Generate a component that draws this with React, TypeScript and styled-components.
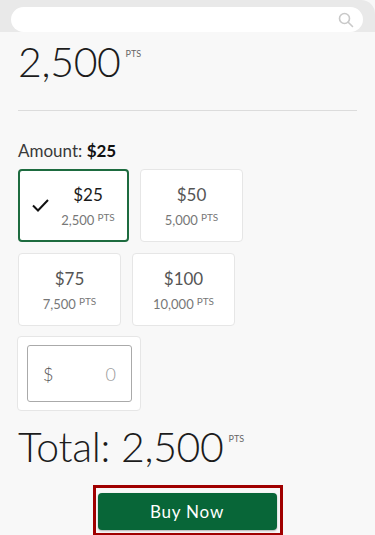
import React from "react";
import styled, { createGlobalStyle } from "styled-components";

const Global = createGlobalStyle`
  html, body { margin: 0; padding: 0; background: #f8f8f8; }
  body { font-family: Lato, "Open Sans", sans-serif; color: #222; }
  * { box-sizing: border-box; }
`;

const Page = styled.div`
  width: 375px;
  height: 535px;
  overflow: hidden;
  background: #f8f8f8;
  display: flex;
  flex-direction: column;
`;

const Header = styled.div`
  height: 40px;
  background: #e9e9e9;
  border-top-right-radius: 14px;
  padding: 7px 12px 0 11px;
`;

const Search = styled.div`
  height: 25px;
  background: #fff;
  border-radius: 13px;
  display: flex;
  align-items: center;
  justify-content: flex-end;
  padding-right: 9px;
`;

const Content = styled.div`
  padding: 0 18px;
  display: flex;
  flex-direction: column;
`;

const BigValue = styled.div<{ $size: number }>`
  display: flex;
  align-items: flex-start;
  font-weight: 300;
  font-size: ${(p) => p.$size}px;
  line-height: 1;
  color: #1c1c1c;
  letter-spacing: -0.3px;
`;

const Unit = styled.span`
  font-size: 9px;
  font-weight: 400;
  color: #666;
  margin-left: 5px;
  margin-top: 8px;
  letter-spacing: 0;
`;

const PointsRow = styled.div`
  margin-top: 9px;
`;

const Divider = styled.hr`
  border: none;
  border-top: 1px solid #dcdcdc;
  margin: 28px 0 0 0;
`;

const AmountLabel = styled.div`
  margin-top: 29px;
  font-size: 17px;
  color: #3a3a3a;
  b {
    font-weight: 700;
    color: #111;
  }
`;

const Cards = styled.div`
  margin-top: 8px;
  display: flex;
  flex-direction: column;
  gap: 11px;
`;

const CardRow = styled.div<{ $gap: number }>`
  display: flex;
  gap: ${(p) => p.$gap}px;
`;

const Card = styled.div<{ $selected?: boolean; $w: number }>`
  width: ${(p) => p.$w}px;
  height: 73px;
  background: #fff;
  border: ${(p) => (p.$selected ? "2px solid #1d6b3f" : "1px solid #e6e6e6")};
  border-radius: 4px;
  display: flex;
  align-items: center;
  justify-content: center;
  gap: 12px;
  padding: 0 4px;
`;

const CardText = styled.div`
  display: flex;
  flex-direction: column;
  align-items: center;
  gap: 4px;
  padding-top: 2px;
`;

const Price = styled.div<{ $selected?: boolean }>`
  font-size: 17px;
  line-height: 20px;
  color: ${(p) => (p.$selected ? "#1a1a1a" : "#555")};
`;

const Pts = styled.div`
  font-size: 13px;
  line-height: 16px;
  color: #777;
  sup {
    font-size: 10px;
    margin-left: 3px;
    vertical-align: 4px;
  }
`;

const CustomCard = styled.div`
  width: 124px;
  height: 75px;
  background: #fff;
  border: 1px solid #e6e6e6;
  border-radius: 4px;
  padding: 8px 8px 8px 9px;
  margin-left: -1px;
  margin-top: -1px;
`;

const CustomInput = styled.div`
  height: 57px;
  border: 1px solid #aaa;
  border-radius: 3px;
  display: flex;
  align-items: center;
  justify-content: space-between;
  padding: 0 15px 0 15px;
  font-size: 18px;
  font-weight: 300;
`;

const Dollar = styled.span`
  color: #555;
`;

const Zero = styled.span`
  color: #999;
`;

const TotalRow = styled.div`
  margin-top: 15px;
`;

const ButtonWrap = styled.div`
  display: flex;
  justify-content: center;
  margin-top: 18px;
`;

const Outline = styled.div`
  border: 3px solid #a00000;
  padding: 5px 3px 3px 2px;
  background: #f8f8f8;
`;

const BuyButton = styled.button`
  width: 179px;
  height: 37px;
  border: none;
  border-radius: 4px;
  background: #086638;
  color: #fff;
  font-family: Lato, "Open Sans", sans-serif;
  font-size: 17px;
  letter-spacing: 0.8px;
  box-shadow: 0 1px 2px rgba(0, 0, 0, 0.3);
  display: block;
`;

const SearchIcon = () => (
  <svg width="16" height="16" viewBox="0 0 16 16" fill="none" stroke="#c9c9c9" strokeWidth="1.6">
    <circle cx="6.5" cy="6.5" r="5" />
    <path d="M10.2 10.2 L14.5 14.5" strokeLinecap="round" />
  </svg>
);

const Check = () => (
  <svg width="17" height="13" viewBox="0 0 17 13" fill="none" stroke="#111" strokeWidth="2">
    <path d="M1 6.5 L6 11.5 L16 1" />
  </svg>
);

type Opt = { price: string; pts: string; w: number; selected?: boolean };

const OptionCard = ({ price, pts, w, selected }: Opt) => (
  <Card $selected={selected} $w={w}>
    {selected && <Check />}
    <CardText>
      <Price $selected={selected}>{price}</Price>
      <Pts>
        {pts}
        <sup>PTS</sup>
      </Pts>
    </CardText>
  </Card>
);

export default function App() {
  return (
    <Page>
      <Global />
      <Header>
        <Search>
          <SearchIcon />
        </Search>
      </Header>
      <Content>
        <PointsRow>
          <BigValue $size={41}>
            2,500<Unit>PTS</Unit>
          </BigValue>
        </PointsRow>
        <Divider />
        <AmountLabel>
          Amount: <b>$25</b>
        </AmountLabel>
        <Cards>
          <CardRow $gap={11}>
            <OptionCard price="$25" pts="2,500" w={111} selected />
            <OptionCard price="$50" pts="5,000" w={103} />
          </CardRow>
          <CardRow $gap={11}>
            <OptionCard price="$75" pts="7,500" w={103} />
            <OptionCard price="$100" pts="10,000" w={103} />
          </CardRow>
          <CardRow $gap={0}>
            <CustomCard>
              <CustomInput>
                <Dollar>$</Dollar>
                <Zero>0</Zero>
              </CustomInput>
            </CustomCard>
          </CardRow>
        </Cards>
        <TotalRow>
          <BigValue $size={41}>
            Total: 2,500<Unit>PTS</Unit>
          </BigValue>
        </TotalRow>
        <ButtonWrap>
          <Outline>
            <BuyButton>Buy Now</BuyButton>
          </Outline>
        </ButtonWrap>
      </Content>
    </Page>
  );
}
